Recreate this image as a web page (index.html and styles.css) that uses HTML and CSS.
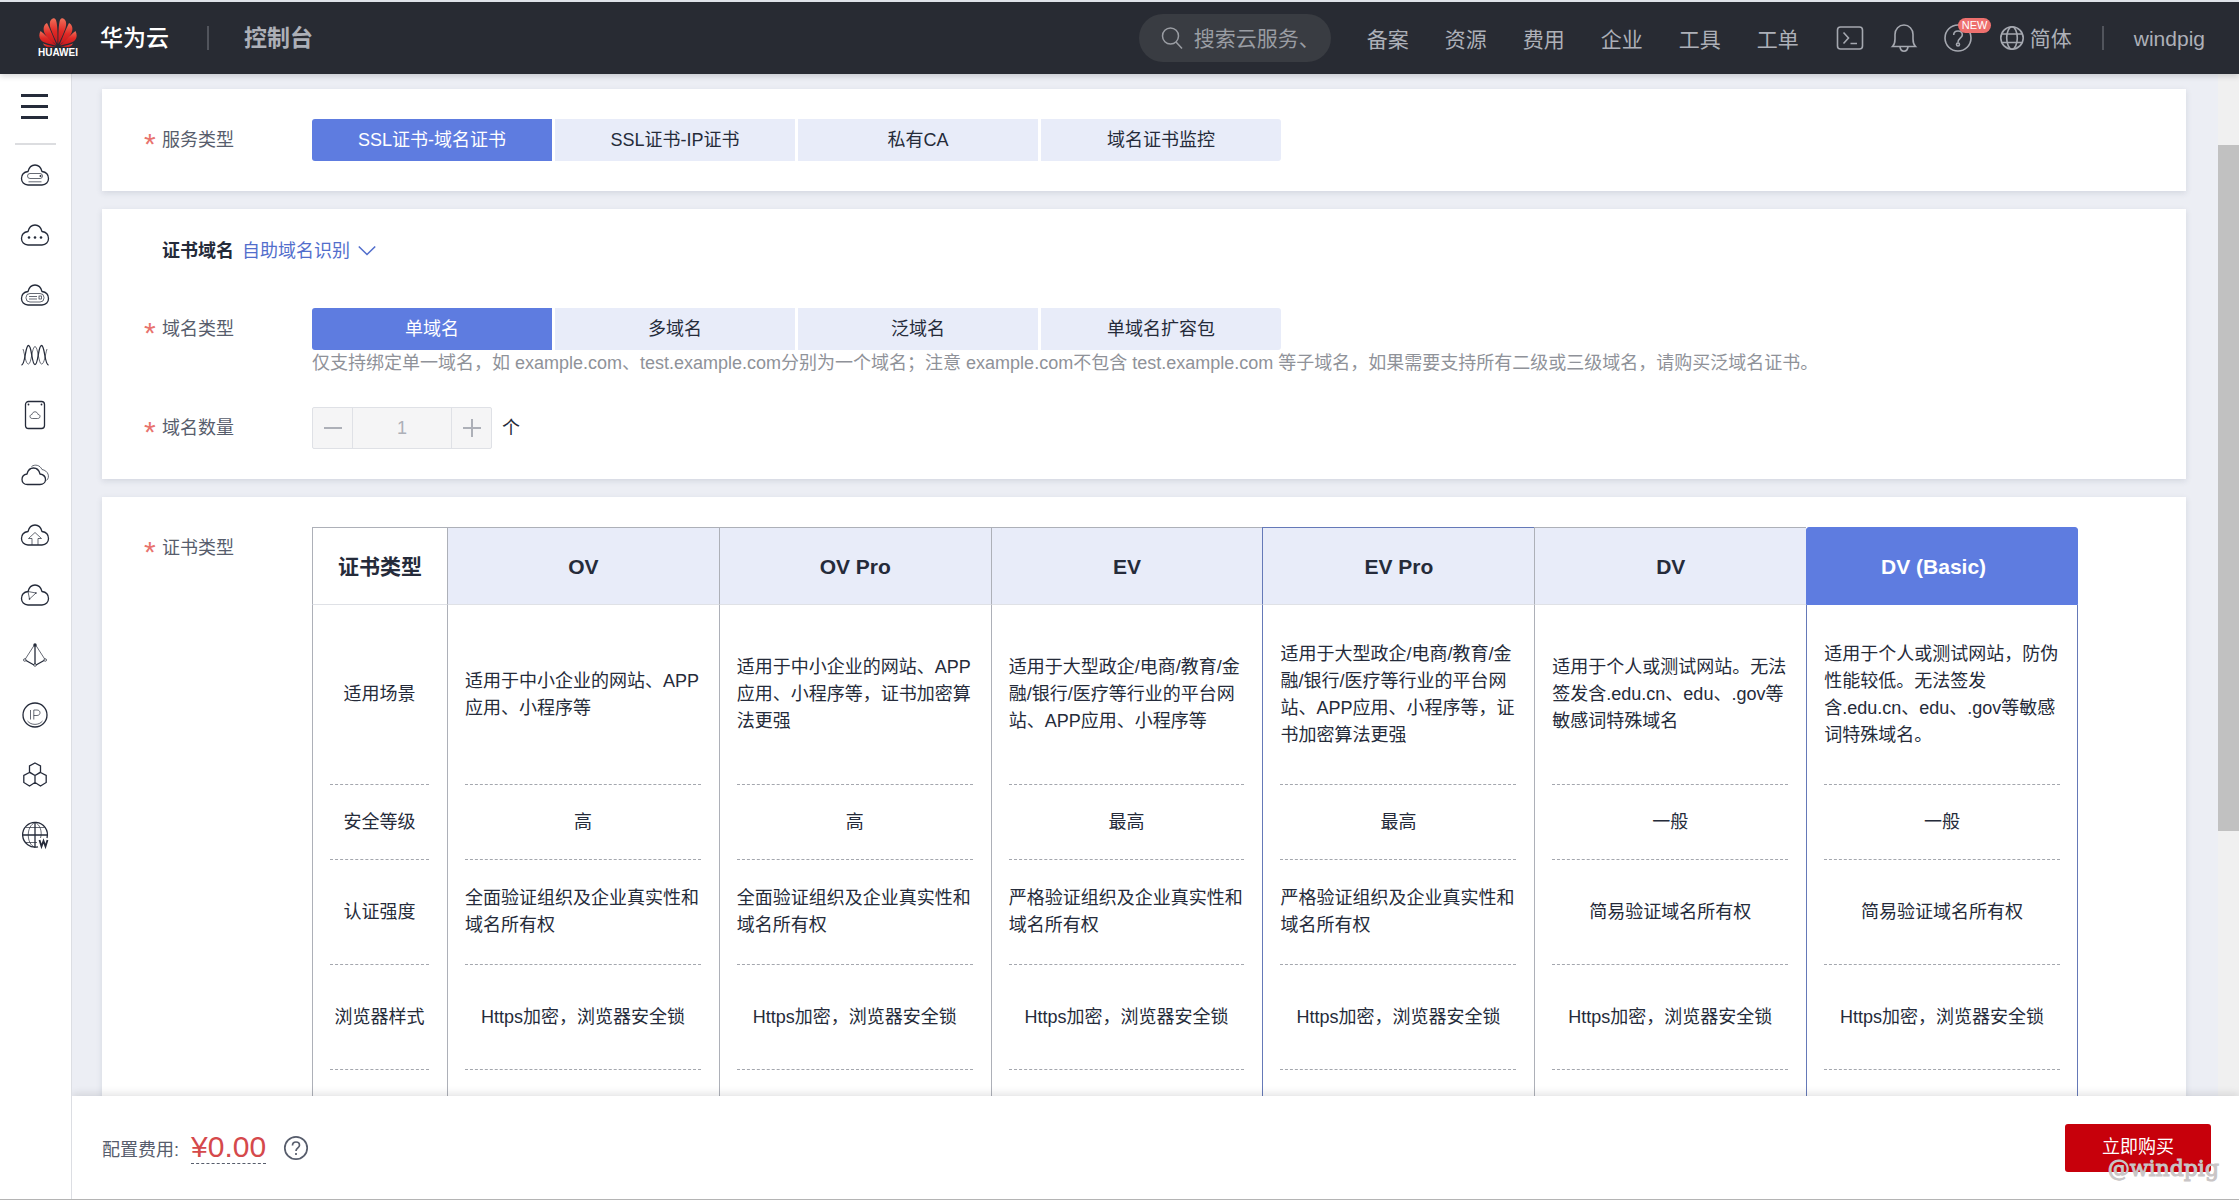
FILE: index.html
```html
<!DOCTYPE html>
<html lang="zh-CN">
<head>
<meta charset="utf-8">
<title>华为云 控制台</title>
<link rel="stylesheet" href="styles.css">
</head>
<body>
<svg class="defs" aria-hidden="true">
  <defs>
    <path id="cloud" d="M8 25C4 25 1.500 22 1.500 18.500C1.500 14.500 4.500 12 8 11.500C9 7.500 11.800 5 15 5C18.200 5 21 7.500 22 11.500C25.500 12 28.500 14.500 28.500 18.500C28.500 22 26 25 22 25Z"/>
    <linearGradient id="petal" x1="0" y1="0" x2="0" y2="1">
      <stop offset="0" stop-color="#f0705a"/><stop offset="0.500" stop-color="#e02a26"/><stop offset="1" stop-color="#c4161c"/>
    </linearGradient>
  </defs>
</svg>
<header class="topbar">
  <a class="brand" href="#">
    <span class="logo">
      <svg width="38" height="30" viewBox="0 0 38 30" fill="url(#petal)">
        <path d="M18.500 27C18.500 27 19 12 17.500 5C17 2 16 1 14.500 1.200C11 2 10 6 11.500 11C13 16 18.500 27 18.500 27Z"/>
        <path d="M19.500 27C19.500 27 19 12 20.500 5C21 2 22 1 23.500 1.200C27 2 28 6 26.500 11C25 16 19.500 27 19.500 27Z"/>
        <path d="M17.500 28C17.500 28 12 14 8 6C4.500 8 3.500 12 6 17C9 22 17.500 28 17.500 28Z"/>
        <path d="M20.500 28C20.500 28 26 14 30 6C33.500 8 34.500 12 32 17C29 22 20.500 28 20.500 28Z"/>
        <path d="M17 28.500C17 28.500 8 19 1.500 14C-.5 18 0 22 3.500 24.500C7 26.500 17 28.500 17 28.500Z"/>
        <path d="M21 28.500C21 28.500 30 19 36.500 14C38.500 18 38 22 34.500 24.500C31 26.500 21 28.500 21 28.500Z"/>
        <path d="M16.500 29.200C12 29 7.500 27.800 4 26.500C5.500 29.500 8 30.500 11 30C13.500 29.800 16.500 29.200 16.500 29.200Z"/>
        <path d="M21.500 29.200C26 29 30.500 27.800 34 26.500C32.500 29.500 30 30.500 27 30C24.500 29.800 21.500 29.200 21.500 29.200Z"/>
      </svg>
      <span class="logo-text">HUAWEI</span>
    </span>
    <span class="brand-name">华为云</span>
  </a>
  <span class="bar"></span>
  <a class="console" href="#">控制台</a>
  <label class="search">
    <svg width="22" height="24" viewBox="0 0 22 24" fill="none" stroke="#9a9da3" stroke-width="1.500"><circle cx="9.500" cy="10" r="8"/><path d="M15 16L21 22.500"/></svg>
    <input type="text" placeholder="搜索云服务、" aria-label="搜索云服务">
  </label>
  <nav class="nav">
    <a href="#">备案</a><a href="#">资源</a><a href="#">费用</a><a href="#">企业</a><a href="#">工具</a><a href="#">工单</a>
  </nav>
  <div class="tools">
    <button type="button" aria-label="CloudShell">
      <svg width="28" height="28" viewBox="0 0 28 28"><rect x="1.500" y="3" width="25" height="22" rx="3"/><path d="M7.500 8.500L12.500 14L7.500 19.500M14.500 19.500H21"/></svg>
    </button>
    <button type="button" aria-label="消息">
      <svg width="28" height="28" viewBox="0 0 28 28"><path d="M2.500 22.500H25.500C23.500 20.500 23 18 23 15V10.500C23 5 19 1 14 1S5 5 5 10.500V15C5 18 4.500 20.500 2.500 22.500ZM10 23C10.500 26 12 27.200 14 27.200S17.500 26 18 23"/></svg>
    </button>
    <button type="button" class="help" aria-label="帮助">
      <svg width="28" height="28" viewBox="0 0 28 28"><circle cx="14" cy="14" r="13"/><path d="M9.700 11C9.700 8.500 11.500 7 14 7S18.300 8.500 18.300 11C18.300 13.800 14 14.300 14 18.500"/><circle cx="14" cy="20.500" r="1.500"/></svg>
      <span class="badge">NEW</span>
    </button>
  </div>
  <button type="button" class="lang">
    <svg width="24" height="26" viewBox="0 0 24 26"><circle cx="12" cy="13" r="11.200"/><ellipse cx="12" cy="13" rx="5.300" ry="11.200"/><path d="M2 9H22M2 17.500H22"/></svg>
    简体
  </button>
  <span class="bar"></span>
  <a class="user" href="#">windpig</a>
</header>
<div class="shell">
  <aside class="side">
    <button type="button" class="menu" aria-label="菜单"><span></span><span></span><span></span></button>
    <hr>
    <nav class="side-nav">
      <a href="#" aria-label="弹性云服务器"><svg viewBox="0 0 30 30"><use href="#cloud"/><g class="thin"><rect x="7.500" y="13.500" width="15" height="5" rx="2.500"/><path d="M8.500 21.800H21.500"/></g><circle class="dot" cx="20.500" cy="16" r="1"/></svg></a>
      <a href="#" aria-label="云耀服务器"><svg viewBox="0 0 30 30"><use href="#cloud"/><g class="dot"><circle cx="9" cy="17.500" r="1.300"/><circle cx="15" cy="17.500" r="1.300"/><circle cx="21" cy="17.500" r="1.300"/></g></svg></a>
      <a href="#" aria-label="裸金属服务器"><svg viewBox="0 0 30 30"><use href="#cloud"/><g class="thin"><rect x="6" y="13.500" width="18" height="8.500" rx="4"/><path d="M9 16.500H17M9 19H17"/><rect x="19" y="16" width="2.500" height="3"/></g></svg></a>
      <a href="#" aria-label="弹性伸缩"><svg viewBox="0 0 30 30"><path d="M1.500 25C5.500 25 5 5.500 8.500 5.500S11.500 24.500 15 24.500 18 5.500 21.500 5.500 24.500 25 28.500 25"/><path class="thin" d="M3 9C5 15 5.500 24 8.500 24S12 6.500 15 6.500 18.500 24 21.500 24 25 15 27 9"/></svg></a>
      <a href="#" aria-label="云硬盘"><svg viewBox="0 0 30 30"><rect x="5.500" y="1.500" width="19" height="27" rx="3"/><path class="thin" d="M12.500 18.500C10.500 18.500 9.800 17.300 10 16.200S11 14.500 12 14.500C12.500 12.500 13.700 11.800 15 11.800S17.500 12.500 18 14.500C19 14.500 20 15 20 16.200S19.500 18.500 17.500 18.500Z"/><g class="dot"><circle cx="8.500" cy="4.500" r=".9"/><circle cx="21.500" cy="4.500" r=".9"/></g></svg></a>
      <a href="#" aria-label="虚拟私有云"><svg viewBox="0 0 30 30"><path d="M7.500 24.500C4 24.500 2 22.500 2 19.500S4 14.500 7 14C8 10 10.500 8 13.500 8S19 10 20 14C23 14.500 25.500 16.500 25.500 19.500S23 24.500 20 24.500Z"/><path class="thin" d="M11.500 6.500C15 4 20 5 22 9.500C28 10.500 30.500 17 26.500 20.500"/></svg></a>
      <a href="#" aria-label="弹性负载"><svg viewBox="0 0 30 30"><use href="#cloud"/><path class="thin" d="M12 25V18.500H8.500L15 12.500L21.500 18.500H18V25"/></svg></a>
      <a href="#" aria-label="云解析"><svg viewBox="0 0 30 30"><use href="#cloud"/><path class="thin" d="M8 11.500L16 13L9.500 19Z"/><g class="dot"><circle cx="16" cy="13" r=".8"/><circle cx="9.500" cy="19" r=".8"/></g></svg></a>
      <a href="#" aria-label="内容分发"><svg viewBox="0 0 30 30"><path class="thin" d="M15 4L5 19.500M15 4L25 19.500"/><path d="M15 4V24M6 20.500L14 25M24 20.500L16 25"/><g class="thin"><circle cx="4.800" cy="20" r="1.300"/><circle cx="25.200" cy="20" r="1.300"/><circle cx="15" cy="25" r="1.300"/></g><circle class="dot" cx="15" cy="5" r="1.700"/></svg></a>
      <a href="#" aria-label="弹性公网 IP"><svg viewBox="0 0 30 30"><circle cx="15" cy="15" r="12"/><path class="thin" d="M10.500 10V19.500M13.800 19.500V10H17C21 10 21 15.500 17 15.500H13.800M7.500 21C11 25.500 19 25.500 22.500 21"/></svg></a>
      <a href="#" aria-label="容器引擎"><svg viewBox="0 0 30 30"><path d="M15 3L20.500 6V12L15 15.500L9.500 12V6ZM9.500 12.500L15 15.500V22.500L9.500 26L3.800 22.500V15.500ZM20.500 12.500L26.200 15.500V22.500L20.500 26L15 22.500V15.500Z"/></svg></a>
      <a href="#" aria-label="域名注册"><svg viewBox="0 0 30 30"><path d="M18 26.800A12.400 12.400 0 1 1 27 18"/><path d="M2.500 15H27.500M15 2.500V27.500"/><path class="thin" d="M5.500 7.500H24.500M5.500 22.500H17M15 27.400C6 24 6 6 15 2.600C20 4 22.500 12 20.500 18"/><path class="w" d="M19.500 20L21.500 26.500L23.500 21L25.500 26.500L27.500 20"/></svg></a>
    </nav>
  </aside>
  <main class="content">
    <form class="cards">
      <section class="card">
        <div class="row" role="radiogroup" aria-labelledby="service-label">
          <span class="label required" id="service-label">服务类型</span>
          <div class="options">
            <label><input type="radio" name="service" checked><span>SSL证书-域名证书</span></label>
            <label><input type="radio" name="service"><span>SSL证书-IP证书</span></label>
            <label><input type="radio" name="service"><span>私有CA</span></label>
            <label><input type="radio" name="service"><span>域名证书监控</span></label>
          </div>
        </div>
      </section>
      <section class="card">
        <div class="title">
          <h2>证书域名</h2>
          <a href="#">自助域名识别
            <svg width="18" height="12" viewBox="0 0 18 12" fill="none" stroke="#526ecc" stroke-width="1.600"><path d="M.8 1.500L9 9.500L17.200 1.500"/></svg>
          </a>
        </div>
        <div class="row" role="radiogroup" aria-labelledby="domain-label">
          <span class="label required" id="domain-label">域名类型</span>
          <div class="field">
            <div class="options">
              <label><input type="radio" name="domain" checked><span>单域名</span></label>
              <label><input type="radio" name="domain"><span>多域名</span></label>
              <label><input type="radio" name="domain"><span>泛域名</span></label>
              <label><input type="radio" name="domain"><span>单域名扩容包</span></label>
            </div>
            <p class="hint">仅支持绑定单一域名，如 example.com、test.example.com分别为一个域名；注意 example.com不包含 test.example.com 等子域名，如果需要支持所有二级或三级域名，请购买泛域名证书。</p>
          </div>
        </div>
        <div class="row count">
          <label class="label required" for="count">域名数量</label>
          <div class="stepper">
            <button type="button" disabled aria-label="减少"><svg width="18" height="18" viewBox="0 0 18 18"><path d="M0 9H18"/></svg></button>
            <input id="count" type="text" value="1" disabled>
            <button type="button" disabled aria-label="增加"><svg width="18" height="18" viewBox="0 0 18 18"><path d="M0 9H18M9 0V18"/></svg></button>
          </div>
          <span class="unit">个</span>
        </div>
      </section>
      <section class="card">
        <div class="row">
          <span class="label required">证书类型</span>
          <table class="compare">
            <thead>
              <tr><th scope="col">证书类型</th><th scope="col">OV</th><th scope="col">OV Pro</th><th scope="col">EV</th><th scope="col" class="hot">EV Pro</th><th scope="col">DV</th><th scope="col" class="active">DV (Basic)</th></tr>
            </thead>
            <tbody>
              <tr class="tall">
                <th scope="row"><div>适用场景</div></th>
                <td><div>适用于中小企业的网站、APP应用、小程序等</div></td>
                <td><div>适用于中小企业的网站、APP应用、小程序等，证书加密算法更强</div></td>
                <td><div>适用于大型政企/电商/教育/金融/银行/医疗等行业的平台网站、APP应用、小程序等</div></td>
                <td class="hot"><div>适用于大型政企/电商/教育/金融/银行/医疗等行业的平台网站、APP应用、小程序等，证书加密算法更强</div></td>
                <td><div>适用于个人或测试网站。无法签发含.edu.cn、edu、.gov等敏感词特殊域名</div></td>
                <td class="active"><div>适用于个人或测试网站，防伪性能较低。无法签发含.edu.cn、edu、.gov等敏感词特殊域名。</div></td>
              </tr>
              <tr class="short">
                <th scope="row"><div>安全等级</div></th>
                <td><div>高</div></td><td><div>高</div></td><td><div>最高</div></td><td class="hot"><div>最高</div></td><td><div>一般</div></td><td class="active"><div>一般</div></td>
              </tr>
              <tr>
                <th scope="row"><div>认证强度</div></th>
                <td><div>全面验证组织及企业真实性和域名所有权</div></td>
                <td><div>全面验证组织及企业真实性和域名所有权</div></td>
                <td><div>严格验证组织及企业真实性和域名所有权</div></td>
                <td class="hot"><div>严格验证组织及企业真实性和域名所有权</div></td>
                <td><div>简易验证域名所有权</div></td>
                <td class="active"><div>简易验证域名所有权</div></td>
              </tr>
              <tr>
                <th scope="row"><div>浏览器样式</div></th>
                <td><div>Https加密，浏览器安全锁</div></td><td><div>Https加密，浏览器安全锁</div></td><td><div>Https加密，浏览器安全锁</div></td><td class="hot"><div>Https加密，浏览器安全锁</div></td><td><div>Https加密，浏览器安全锁</div></td><td class="active"><div>Https加密，浏览器安全锁</div></td>
              </tr>
              <tr><th></th><td><div></div></td><td></td><td></td><td class="hot"></td><td></td><td class="active"></td></tr>
            </tbody>
          </table>
        </div>
      </section>
    </form>
    <div class="scroll"><div class="thumb"></div></div>
    <footer class="pay">
      <span class="pay-label">配置费用:</span>
      <span class="price">¥0.00</span>
      <svg width="26" height="26" viewBox="0 0 26 26" fill="none" stroke="#575d6c" stroke-width="1.700"><circle cx="13" cy="13" r="11.200"/><path d="M9.500 10.500C9.500 8.300 11 7 13 7S16.500 8.300 16.500 10.300C16.500 12.800 13 13 13 16"/><path d="M13 18V20"/></svg>
      <button type="button" class="buy">立即购买</button>
      <span class="mark">@windpig</span>
    </footer>
  </main>
</div>
</body>
</html>
```
FILE: styles.css
```css
* { box-sizing: border-box; }

body {
  margin: 0;
  height: 100vh;
  display: flex;
  flex-direction: column;
  overflow: hidden;
  border-top: 2px solid #dfe3e9;
  border-bottom: 1px solid #b4b4b4;
  background: #fff;
  color: #252b3a;
  font: 400 18px/27px "Liberation Sans", "Noto Sans CJK SC", sans-serif;
}

a { color: inherit; text-decoration: none; }
button, input { font: inherit; color: inherit; border: 0; padding: 0; background: none; }
.defs { position: absolute; width: 0; height: 0; }

/* Top bar */
.topbar {
  flex: none;
  height: 72px;
  display: flex;
  align-items: center;
  padding: 0 34px 0 39px;
  background: #282b33;
  color: #adb0b8;
  font-size: 21px;
  white-space: nowrap;
  position: relative;
  box-shadow: 0 2px 6px rgba(40, 43, 51, 0.2);
  z-index: 2;
}
.topbar svg { flex: none; }
.brand { display: flex; align-items: center; gap: 23px; color: #fff; }
.logo { display: flex; flex-direction: column; align-items: center; width: 38px; }
.logo-text { font: bold 10px/12px "Liberation Sans", sans-serif; }
.brand-name, .console { font-size: 23px; font-weight: 500; }
.console { font-weight: 700; }
.bar { width: 2px; height: 24px; background: #51545c; }
.brand + .bar { margin: 0 35px 0 38px; }
.search {
  margin-left: auto;
  width: 192px;
  height: 48px;
  border-radius: 24px;
  background: #393c42;
  display: flex;
  align-items: center;
  gap: 11px;
  padding: 0 18px 0 22px;
}
.search input { width: 126px; outline: 0; }
.search input::placeholder { color: #9a9da3; opacity: 1; }
.nav { display: flex; gap: 36px; margin: 2px 37px 0 36px; }
.tools { display: flex; gap: 26px; }
.tools button, .lang { display: flex; align-items: center; }
.tools svg, .lang svg { fill: none; stroke: #a5a8b0; stroke-width: 1.6; }
.help { position: relative; }
.badge {
  position: absolute;
  left: 14px;
  top: -6px;
  padding: 0 4px;
  border-radius: 8px;
  background: #ee706e;
  color: #fff;
  font: 11px/15px "Liberation Sans", sans-serif;
}
.lang { gap: 6px; margin: 0 30px 0 28px; }
.user { margin-left: 30px; }

/* Side menu */
.shell { flex: 1; display: flex; min-height: 0; }
.side { width: 72px; flex: none; border-right: 1px solid #dcdee3; padding: 20px 15px 0; overflow: hidden; }
.menu { display: flex; flex-direction: column; gap: 8px; width: 27px; margin: 0 6px; }
.menu span { height: 3px; background: #252b3a; }
.side hr { margin: 24px 0 0; border: 0; height: 2px; background: #dcdde0; }
.side-nav a { height: 60px; display: flex; align-items: center; justify-content: center; }
.side-nav svg { width: 30px; height: 30px; margin-right: 2px; fill: none; stroke: #252b3a; stroke-width: 1.3; }
.side-nav .thin { stroke-width: 0.7; }
.side-nav .dot { fill: #252b3a; stroke: none; }
.side-nav .w { stroke-width: 1.8; }

/* Content */
.content { flex: 1; min-width: 0; position: relative; background: #eceef4; overflow: hidden; }
.cards { display: flex; flex-direction: column; gap: 18px; padding: 15px 53px 0 30px; }
.card { background: #fff; padding: 30px 108px 30px 42px; box-shadow: 0 2px 6px rgba(60, 70, 100, 0.14); }
.row { display: flex; }
.label { flex: none; width: 168px; height: 42px; line-height: 42px; display: flex; color: #575d6c; }
.required::before { content: "*"; width: 18px; font-size: 30px; line-height: 50px; color: #e8736e; }
.options { display: flex; gap: 3px; }
.options label { position: relative; width: 240px; height: 42px; }
.options input { position: absolute; opacity: 0; }
.options span { display: block; line-height: 42px; text-align: center; background: #e8ecf9; }
.options label:first-child span { border-radius: 3px 0 0 3px; }
.options label:last-child span { border-radius: 0 3px 3px 0; }
.options input:checked + span { background: #5e7ce0; color: #fff; }
.title { display: flex; gap: 8px; padding-left: 18px; line-height: 24px; margin-bottom: 45px; }
.title h2 { margin: 0; font-size: 18px; line-height: 24px; font-weight: 700; }
.title a { color: #526ecc; display: flex; align-items: center; gap: 8px; }
.hint { margin: 0; color: #8f9299; }
.count { margin-top: 30px; }
.stepper { display: flex; width: 180px; height: 42px; border: 1px solid #dfe1e6; border-radius: 2px; background: #f5f5f6; }
.stepper button { width: 39px; display: flex; align-items: center; justify-content: center; }
.stepper svg { stroke: #adb0b8; stroke-width: 2; }
.stepper input { flex: 1; min-width: 0; text-align: center; color: #adb0b8; border: solid #dfe1e6; border-width: 0 1px; }
.unit { line-height: 42px; margin-left: 10px; }

/* Comparison table */
.compare { width: 100%; min-width: 0; table-layout: fixed; border-collapse: separate; border-spacing: 0; }
.compare th, .compare td { padding: 0 18px 0 17px; border-left: 1px solid #adb0b8; }
.compare th:first-child { width: 135px; }
.compare thead th { height: 78px; padding: 0; font-size: 21px; font-weight: 700; background: #e8ecf9; border-top: 1px solid #adb0b8; border-bottom: 1px solid #dfe1e6; }
.compare thead th:first-child { background: #fff; }
.compare thead .hot { border-top-color: #6579b8; }
.compare .hot { border-left-color: #6579b8; }
.compare .active { border-left-color: #6579b8; border-right: 1px solid #6579b8; padding-right: 17px; }
.compare thead .active { background: #5e7ce0; border-color: #5e7ce0; color: #fff; border-radius: 3px 3px 0 0; }
.compare tbody th { font-weight: 400; }
.compare div { height: 105px; display: flex; align-items: center; justify-content: center; border-bottom: 1px dashed #a4a7ae; }
.compare .tall div { height: 180px; }
.compare .short div { height: 75px; }
.compare tbody th div { white-space: nowrap; }

/* Scroll indicator */
.scroll { position: absolute; top: 0; right: 0; bottom: 0; width: 21px; background: #f0f0f0; }
.thumb { margin-top: 71px; height: 61%; background: #c1c1c1; }

/* Payment bar */
.pay {
  position: absolute;
  left: 0;
  right: 0;
  bottom: 0;
  height: 103px;
  display: flex;
  align-items: center;
  padding: 0 28px 0 30px;
  background: #fff;
  box-shadow: 0 -2px 8px rgba(40, 43, 51, 0.14);
}
.pay-label { color: #575d6c; margin: 6px 12px 0 0; }
.price { font-size: 30px; line-height: 32px; color: #d5494b; border-bottom: 1px dashed #575d6c; margin-right: 17px; }
.buy { margin-left: auto; width: 146px; height: 48px; border-radius: 3px; background: #c7000b; color: #fff; }
.mark {
  position: absolute;
  right: 20px;
  bottom: 16px;
  font: 22px/28px "DejaVu Serif", serif;
  color: #c9c5c6;
  -webkit-text-stroke: 1px #c9c5c6;
}
```
